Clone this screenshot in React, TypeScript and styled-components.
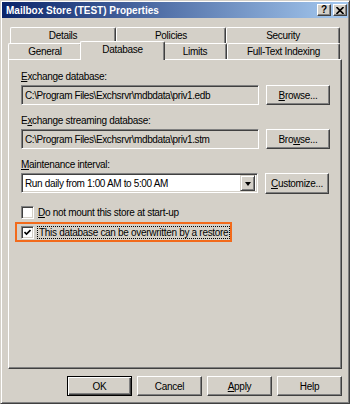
import React, { FC, ReactNode } from 'react'
import styled, { createGlobalStyle, css } from 'styled-components'

const FACE = '#d4d0c8'

const GlobalStyle = createGlobalStyle`
  html,
  body {
    margin: 0;
    padding: 0;
    background: ${FACE};
    font-family: 'Liberation Sans', Arial, sans-serif;
    font-size: 10px;
    color: #000;
  }
`

const raised = css`
  border: 1px solid;
  border-color: #fff #404040 #404040 #fff;
  box-shadow: inset -1px -1px #808080;
`

const sunken = css`
  border: 1px solid;
  border-color: #808080 #fff #fff #808080;
  box-shadow: inset 1px 1px #404040, inset -1px -1px ${FACE};
`

const StyledWindow = styled.div`
  width: 350px;
  height: 404px;
  box-sizing: border-box;
  background: ${FACE};
  border: 1px solid;
  border-color: ${FACE} #404040 #404040 ${FACE};
  box-shadow: inset 1px 1px #fff, inset -1px -1px #808080;
  padding: 1px;
  display: flex;
  flex-direction: column;
`

const StyledTitleBar = styled.div`
  height: 16px;
  display: flex;
  align-items: center;
  padding: 0 1px 0 4px;
  background: linear-gradient(to right, #0a246a, #a6caf0);
  color: #fff;
  font-weight: bold;
  font-size: 10px;

  .title {
    flex: 1;
  }
`

const StyledTitleButton = styled.div`
  width: 14px;
  height: 12px;
  box-sizing: border-box;
  ${raised};
  background: ${FACE};
  color: #000;
  display: flex;
  align-items: center;
  justify-content: center;
  font-size: 10px;
  font-weight: bold;
  line-height: 1;

  & + & {
    margin-left: 2px;
  }
`

const StyledBody = styled.div`
  flex: 1;
  display: flex;
  flex-direction: column;
  padding: 9px 6px 0 6px;
`

const StyledTabRow = styled.div<{ $indent: number }>`
  display: flex;
  height: 16px;
  margin-left: ${({ $indent }) => $indent}px;
`

const StyledTab = styled.div<{ $width: number; $selected?: boolean }>`
  box-sizing: border-box;
  width: ${({ $width }) => $width}px;
  height: 16px;
  background: ${FACE};
  border-top: 1px solid #fff;
  border-left: 1px solid #fff;
  border-right: 1px solid #404040;
  box-shadow: inset -1px 0 #808080;
  border-top-left-radius: 2px;
  border-top-right-radius: 2px;
  display: flex;
  align-items: center;
  justify-content: center;
  letter-spacing: -0.3px;
  white-space: nowrap;

  ${({ $selected, $width }) =>
    $selected &&
    `
    width: ${$width + 4}px;
    height: 19px;
    margin: -2px -2px 0 -2px;
    padding-bottom: 3px;
    z-index: 1;
  `}
`

const StyledPanel = styled.div`
  box-sizing: border-box;
  height: 310px;
  background: ${FACE};
  border: 1px solid;
  border-color: #fff #404040 #404040 #fff;
  box-shadow: inset -1px -1px #808080;
  padding: 10px 11px 0 12px;
  display: flex;
  flex-direction: column;
`

const StyledGroup = styled.div`
  display: flex;
  flex-direction: column;
  margin-bottom: 9px;
`

const StyledLabel = styled.div`
  height: 13px;
  line-height: 13px;
  margin-bottom: 2px;
  letter-spacing: -0.3px;
  white-space: nowrap;
`

const StyledFieldRow = styled.div`
  display: flex;
  align-items: center;
  gap: 7px;
  height: 20px;
`

const StyledTextBox = styled.div`
  box-sizing: border-box;
  width: 238px;
  height: 20px;
  ${sunken};
  background: ${FACE};
  padding: 0 3px;
  display: flex;
  align-items: center;
  letter-spacing: -0.4px;
  white-space: nowrap;
  overflow: hidden;
`

const StyledSelect = styled.div`
  box-sizing: border-box;
  width: 237px;
  height: 20px;
  ${sunken};
  background: #fff;
  padding: 2px 2px 2px 3px;
  display: flex;
  align-items: center;
  letter-spacing: -0.35px;
  white-space: nowrap;

  .value {
    flex: 1;
  }
`

const StyledDropButton = styled.div`
  box-sizing: border-box;
  width: 15px;
  height: 16px;
  background: ${FACE};
  border: 1px solid;
  border-color: ${FACE} #404040 #404040 ${FACE};
  box-shadow: inset 1px 1px #fff, inset -1px -1px #808080;
  display: flex;
  align-items: center;
  justify-content: center;

  &::after {
    content: '';
    border-left: 3px solid transparent;
    border-right: 3px solid transparent;
    border-top: 4px solid #000;
    margin-top: 1px;
  }
`

const StyledButton = styled.div<{ $width?: number; $height?: number; $default?: boolean }>`
  box-sizing: border-box;
  width: ${({ $width }) => $width || 64}px;
  height: ${({ $height }) => $height || 20}px;
  background: ${FACE};
  ${raised};
  display: flex;
  align-items: center;
  justify-content: center;
  letter-spacing: -0.3px;
  white-space: nowrap;

  ${({ $default }) =>
    $default &&
    `
    border-color: #000;
    box-shadow: inset 1px 1px #fff, inset -1px -1px #404040, inset -2px -2px #808080;
  `}
`

const StyledCheckRow = styled.div<{ $highlight?: boolean }>`
  display: flex;
  align-items: center;
  gap: 4px;
  height: 20px;
  box-sizing: border-box;
  letter-spacing: -0.3px;
  white-space: nowrap;

  ${({ $highlight }) =>
    $highlight &&
    `
    width: 217px;
    margin-left: -6px;
    padding-left: 4px;
    border: 2px solid #f26a1b;
  `}
`

const StyledCheckBox = styled.div`
  box-sizing: border-box;
  width: 13px;
  height: 13px;
  flex: none;
  ${sunken};
  background: #fff;
  display: flex;
  align-items: center;
  justify-content: center;
`

const StyledFocus = styled.span`
  outline: 1px dotted #000;
  padding: 0 1px;
`

const StyledButtonRow = styled.div`
  display: flex;
  justify-content: flex-end;
  gap: 5px;
  margin-top: 7px;
`

const U = styled.span`
  text-decoration: underline;
  text-underline-offset: 1px;
`

interface iCheckProps {
  checked?: boolean
  highlight?: boolean
  children: ReactNode
}

const Check: FC<iCheckProps> = ({ checked, highlight, children }) => (
  <StyledCheckRow $highlight={highlight}>
    <StyledCheckBox>
      {checked && (
        <svg width="7" height="7" viewBox="0 0 7 7">
          <path d="M0.5 3 L2.5 5 L6.5 1" fill="none" stroke="#000" strokeWidth="1.6" />
        </svg>
      )}
    </StyledCheckBox>
    {children}
  </StyledCheckRow>
)

const App: FC = () => (
  <>
    <GlobalStyle />
    <StyledWindow>
      <StyledTitleBar>
        <span className="title">Mailbox Store (TEST) Properties</span>
        <StyledTitleButton>?</StyledTitleButton>
        <StyledTitleButton>
          <svg width="8" height="7" viewBox="0 0 8 7">
            <path d="M0.5 0 L7.5 7 M7.5 0 L0.5 7" stroke="#000" strokeWidth="1.6" />
          </svg>
        </StyledTitleButton>
      </StyledTitleBar>

      <StyledBody>
        <StyledTabRow $indent={2}>
          <StyledTab $width={106}>Details</StyledTab>
          <StyledTab $width={110}>Policies</StyledTab>
          <StyledTab $width={114}>Security</StyledTab>
        </StyledTabRow>
        <StyledTabRow $indent={0}>
          <StyledTab $width={74}>General</StyledTab>
          <StyledTab $width={81} $selected>
            Database
          </StyledTab>
          <StyledTab $width={64}>Limits</StyledTab>
          <StyledTab $width={113}>Full-Text Indexing</StyledTab>
        </StyledTabRow>

        <StyledPanel>
          <StyledGroup>
            <StyledLabel>
              <U>E</U>xchange database:
            </StyledLabel>
            <StyledFieldRow>
              <StyledTextBox>C:\Program Files\Exchsrvr\mdbdata\priv1.edb</StyledTextBox>
              <StyledButton>
                <U>B</U>rowse...
              </StyledButton>
            </StyledFieldRow>
          </StyledGroup>

          <StyledGroup>
            <StyledLabel>
              E<U>x</U>change streaming database:
            </StyledLabel>
            <StyledFieldRow>
              <StyledTextBox>C:\Program Files\Exchsrvr\mdbdata\priv1.stm</StyledTextBox>
              <StyledButton>
                Bro<U>w</U>se...
              </StyledButton>
            </StyledFieldRow>
          </StyledGroup>

          <StyledGroup>
            <StyledLabel>
              <U>M</U>aintenance interval:
            </StyledLabel>
            <StyledFieldRow>
              <StyledSelect>
                <span className="value">Run daily from 1:00 AM to 5:00 AM</span>
                <StyledDropButton />
              </StyledSelect>
              <StyledButton $height={21}>
                <U>C</U>ustomize...
              </StyledButton>
            </StyledFieldRow>
          </StyledGroup>

          <Check>
            <span>
              <U>D</U>o not mount this store at start-up
            </span>
          </Check>
          <Check checked highlight>
            <StyledFocus>This database can be overwritten by a restore</StyledFocus>
          </Check>
        </StyledPanel>

        <StyledButtonRow>
          <StyledButton $width={65} $default>
            OK
          </StyledButton>
          <StyledButton $width={65}>Cancel</StyledButton>
          <StyledButton $width={65}>
            <U>A</U>pply
          </StyledButton>
          <StyledButton $width={65}>Help</StyledButton>
        </StyledButtonRow>
      </StyledBody>
    </StyledWindow>
  </>
)

export default App
